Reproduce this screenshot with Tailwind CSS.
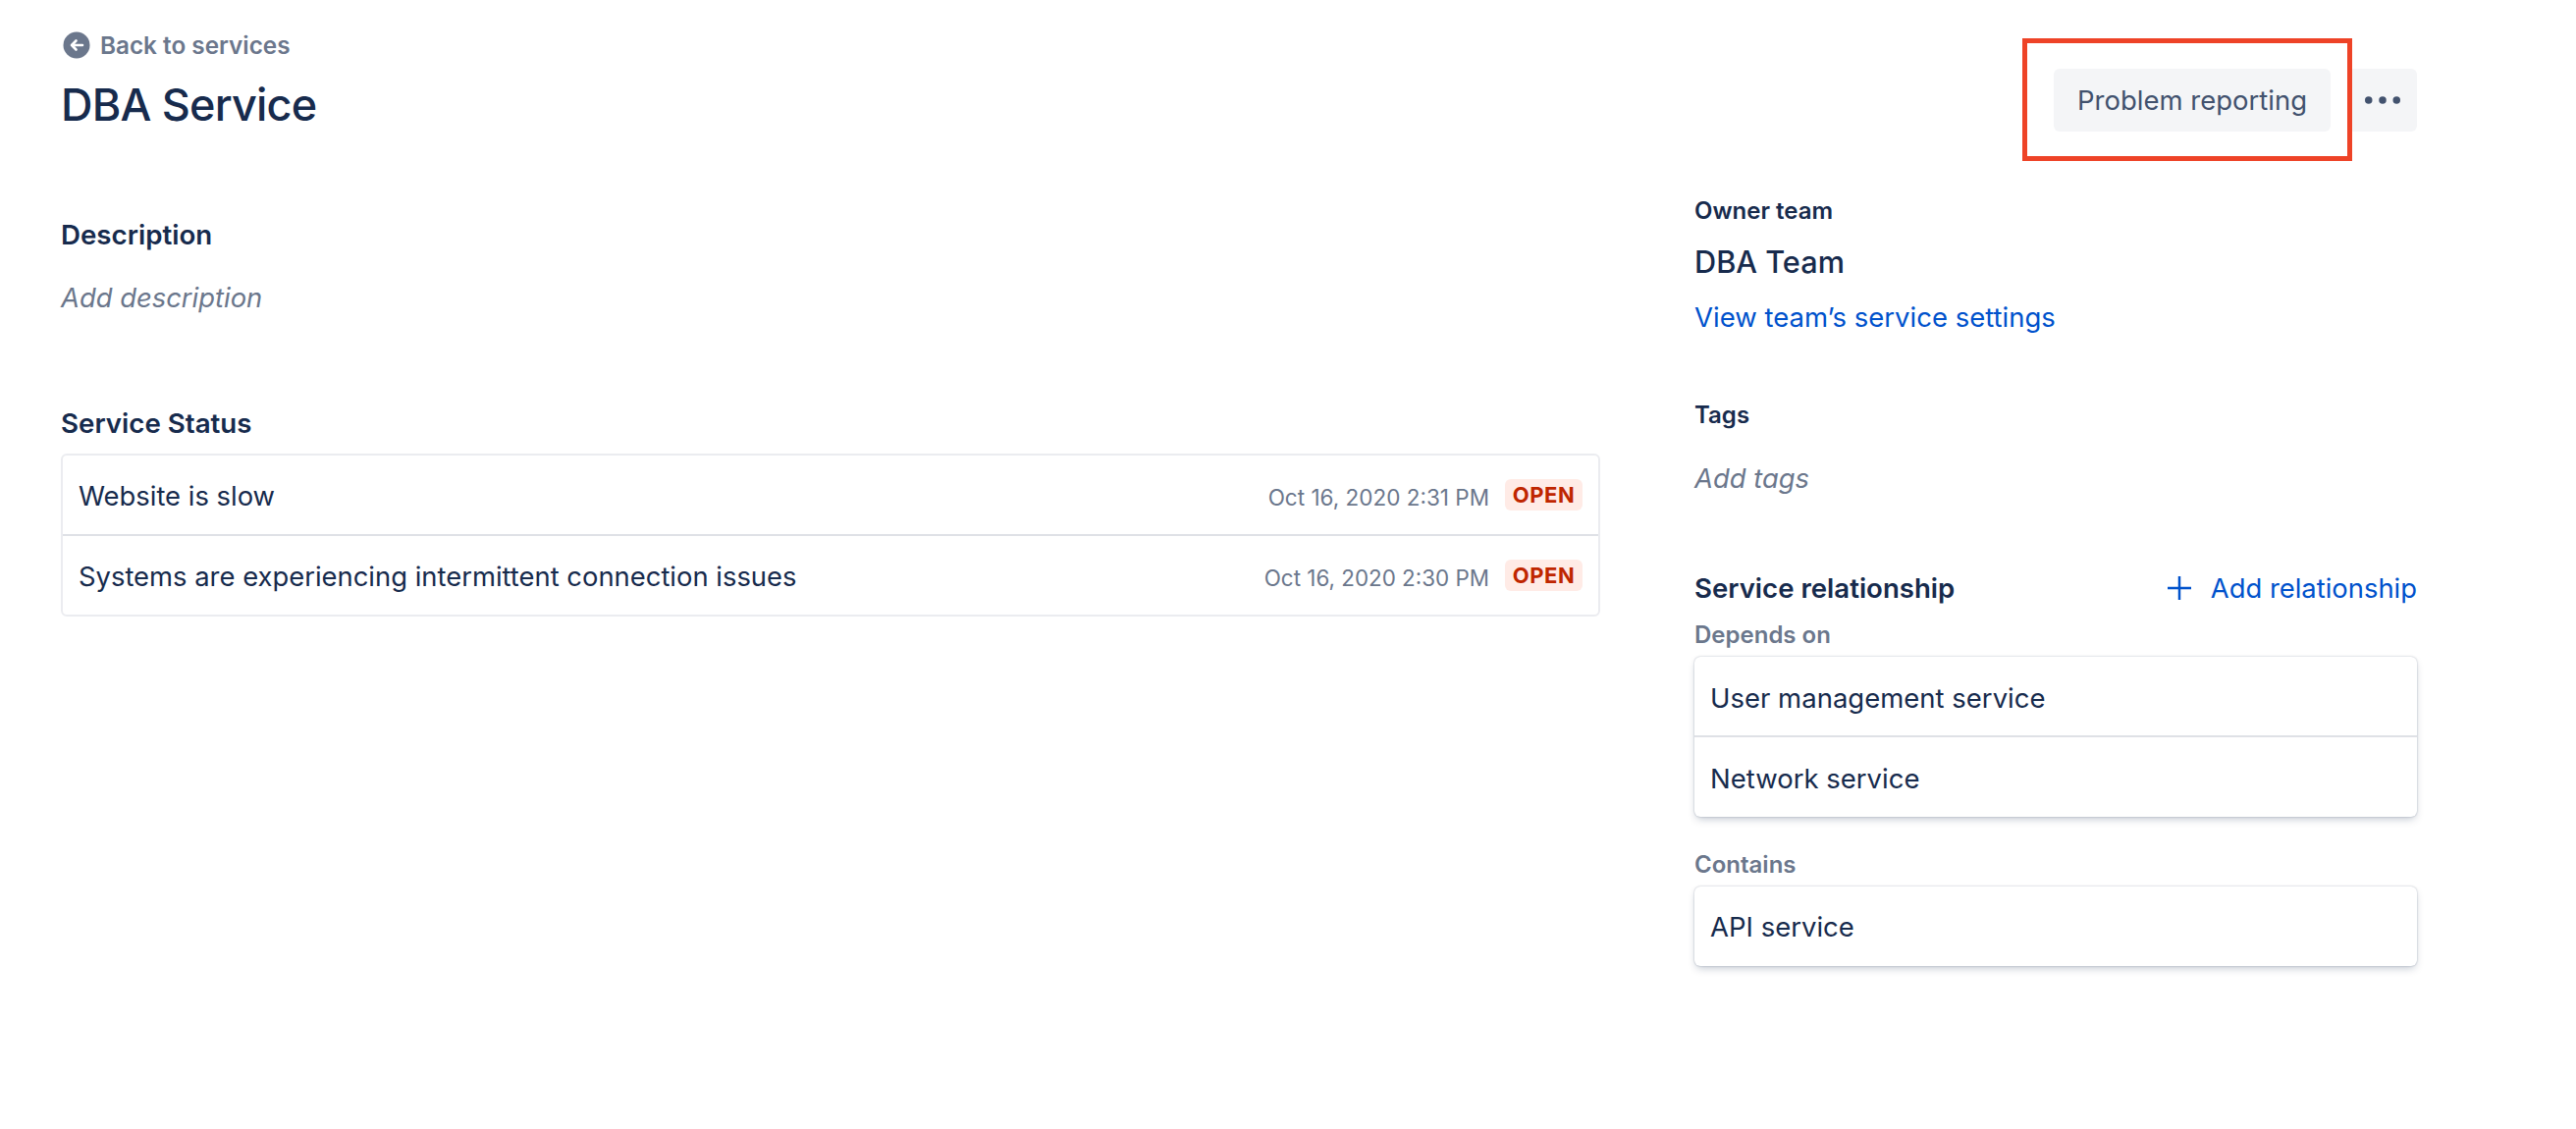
<!doctype html>
<html>
<head>
<meta charset="utf-8">
<script src="https://cdn.jsdelivr.net/npm/@tailwindcss/browser@4"></script>
</head>
<body class="bg-white font-['Inter',sans-serif] text-[#172B4D] antialiased">
<div class="relative w-[2624px] h-[1150px] overflow-hidden pl-[62px] pr-[162px] pt-[30px]">
  <header class="flex justify-between">
    <div>
      <a class="flex items-center gap-[10px] h-[32px] ml-[2px] text-[24.3px] leading-[32px] font-semibold text-[#6B778C]">
        <svg class="w-[28px] h-[28px]" viewBox="0 0 28 28"><circle cx="14" cy="14" r="13.5" fill="#6B778C"/><path d="M20 14H9M13.5 9.5 9 14l4.500 4.500" fill="none" stroke="#fff" stroke-width="2.600" stroke-linecap="round" stroke-linejoin="round"/></svg>
        Back to services
      </a>
      <h1 class="mt-[15px] text-[45px] leading-[60px] font-medium tracking-[-0.8px]">DBA Service</h1>
    </div>
    <div class="flex gap-[17px] mt-[40px]">
      <button class="w-[282px] h-[64px] pt-[2px] rounded-[6px] bg-[#F4F5F7] text-[27.5px] text-[#42526E]">Problem reporting</button>
      <button class="w-[71px] h-[64px] rounded-[6px] bg-[#F4F5F7] flex items-center justify-center">
        <svg class="w-[36px] h-[8px]" viewBox="0 0 36 8"><circle cx="3.750" cy="4" r="3.750" fill="#42526E"/><circle cx="18" cy="4" r="3.750" fill="#42526E"/><circle cx="32.250" cy="4" r="3.750" fill="#42526E"/></svg>
      </button>
    </div>
  </header>

  <main class="flex gap-[96px] mt-[61px]">
    <section class="w-[1568px] pt-[21px]">
      <h2 class="text-[27.7px] leading-[40px] font-semibold">Description</h2>
      <p class="mt-[24px] text-[27.4px] leading-[40px] italic text-[#6B778C]">Add description</p>
      <h2 class="mt-[88px] text-[27.7px] leading-[40px] font-semibold">Service Status</h2>
      <div class="mt-[11px] h-[166px] rounded-[6px] border-2 border-[#EBECF0] flex flex-col">
        <div class="h-[82px] flex items-center pl-[16px] pr-[16px] border-b-2 border-[#DFE1E6] text-[27.4px]">
          <span class="mt-[3px]">Website is slow</span>
          <span class="ml-auto text-[22.5px] text-[#6B778C] mt-[5px]">Oct 16, 2020 2:31 PM</span>
          <span class="ml-[16px] h-[32px] w-[79px] rounded-[6px] bg-[#FFEBE6] text-[#BF2600] text-[22px] leading-[32px] font-bold text-center tracking-[0.5px]">OPEN</span>
        </div>
        <div class="h-[80px] flex items-center pl-[16px] pr-[16px] text-[27.4px]">
          <span class="mt-[3px]">Systems are experiencing intermittent connection issues</span>
          <span class="ml-auto text-[22.4px] text-[#6B778C] mt-[5px]">Oct 16, 2020 2:30 PM</span>
          <span class="ml-[16px] h-[32px] w-[79px] rounded-[6px] bg-[#FFEBE6] text-[#BF2600] text-[22px] leading-[32px] font-bold text-center tracking-[0.5px]">OPEN</span>
        </div>
      </div>
    </section>

    <aside class="w-[736px] pt-[1px]">
      <h3 class="text-[24px] leading-[32px] font-semibold">Owner team</h3>
      <p class="mt-[16px] text-[30.7px] leading-[40px] font-medium">DBA Team</p>
      <a class="block mt-[16px] text-[27.5px] leading-[40px] text-[#0052CC]">View team’s service settings</a>
      <h3 class="mt-[64px] text-[24px] leading-[32px] font-semibold">Tags</h3>
      <p class="mt-[28px] text-[27.4px] leading-[40px] italic text-[#6B778C]">Add tags</p>
      <div class="mt-[72px] flex items-center justify-between h-[40px]">
        <h2 class="text-[27.6px] leading-[40px] font-semibold">Service relationship</h2>
        <a class="flex items-center gap-[20px] text-[27.4px] leading-[40px] text-[#0052CC]">
          <svg class="w-[24px] h-[24px]" viewBox="0 0 24 24"><path d="M12 0v24M0 12h24" stroke="#0052CC" stroke-width="2.500" fill="none"/></svg>
          Add relationship
        </a>
      </div>
      <h4 class="mt-[12px] text-[24px] leading-[32px] font-semibold text-[#6B778C]">Depends on</h4>
      <div class="mt-[6px] h-[163px] rounded-[6px] bg-white shadow-[0_4px_8px_-2px_rgba(9,30,66,0.25),0_0_2px_rgba(9,30,66,0.31)] text-[27.5px]">
        <div class="h-[82px] flex items-center pl-[16px] pt-[5px] border-b-2 border-[#DFE1E6]">User management service</div>
        <div class="h-[81px] flex items-center pl-[16px] pt-[5px]">Network service</div>
      </div>
      <h4 class="mt-[33px] text-[24px] leading-[32px] font-semibold text-[#6B778C]">Contains</h4>
      <div class="mt-[6px] h-[81px] rounded-[6px] bg-white shadow-[0_4px_8px_-2px_rgba(9,30,66,0.25),0_0_2px_rgba(9,30,66,0.31)] text-[27.5px] flex items-center pl-[16px] pt-[3px]">API service</div>
    </aside>
  </main>

  <div class="absolute left-[2060px] top-[39px] w-[336px] h-[125px] border-[5px] border-[#EE4327]"></div>
</div>
</body>
</html>
